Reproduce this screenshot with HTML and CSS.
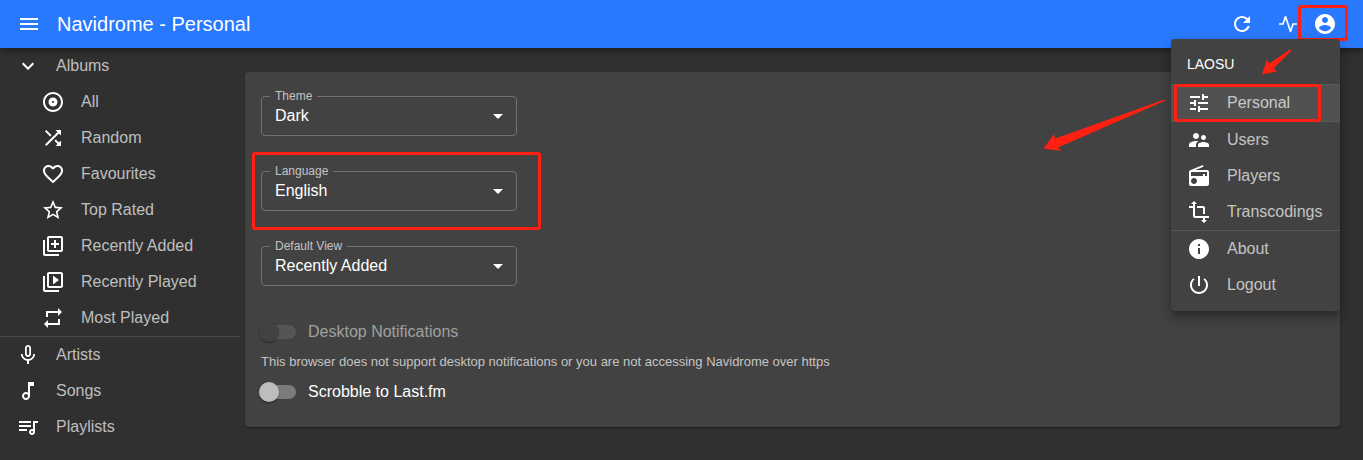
FILE: index.html
```html
<!DOCTYPE html>
<html lang="en">
<head>
<meta charset="utf-8">
<meta name="viewport" content="width=device-width, initial-scale=1">
<title>Navidrome - Personal</title>
<link rel="stylesheet" href="styles.css">
</head>
<body>
<header class="appbar">
  <button class="icon-button" type="button" aria-label="Toggle menu"><svg class="icon" viewBox="0 0 24 24"><path d="M3 18h18v-2H3v2zm0-5h18v-2H3v2zm0-7v2h18V6H3z"/></svg></button>
  <h1 class="title">Navidrome - Personal</h1>
  <div class="actions">
    <button class="icon-button" type="button" aria-label="Refresh"><svg class="icon" viewBox="0 0 24 24"><path d="M17.65 6.35C16.2 4.9 14.21 4 12 4c-4.42 0-7.99 3.58-7.99 8s3.57 8 7.99 8c3.73 0 6.84-2.55 7.73-6h-2.08c-.82 2.33-3.04 4-5.65 4-3.31 0-6-2.69-6-6s2.69-6 6-6c1.66 0 3.14.69 4.22 1.78L13 11h7V4l-2.35 2.35z"/></svg></button>
    <button class="icon-button activity" type="button" aria-label="Activity"><svg class="icon icon-small icon-line" viewBox="0 0 24 24"><polyline points="22 12 18 12 15 21 9 3 6 12 2 12"/></svg></button>
    <div class="account">
      <button class="icon-button" type="button" aria-label="Profile"><svg class="icon" viewBox="0 0 24 24"><path d="M12 2C6.48 2 2 6.48 2 12s4.48 10 10 10 10-4.48 10-10S17.52 2 12 2zm0 3c1.66 0 3 1.34 3 3s-1.34 3-3 3-3-1.34-3-3 1.34-3 3-3zm0 14.2c-2.5 0-4.71-1.28-6-3.22.03-1.99 4-3.08 6-3.08 1.99 0 5.97 1.09 6 3.08-1.29 1.94-3.5 3.22-6 3.22z"/></svg></button>
      <span class="mark mark-account"></span>
    </div>
  </div>
  <nav class="user-menu" aria-label="User menu">
    <div class="user-name">LAOSU</div>
    <a class="item item-selected" href="#personal"><svg class="icon" viewBox="0 0 24 24"><path d="M3 17v2h6v-2H3zM3 5v2h10V5H3zm10 16v-2h8v-2h-8v-2h-2v6h2zM7 9v2H3v2h4v2h2V9H7zm14 4v-2H11v2h10zm-6-4h2V7h4V5h-4V3h-2v6z"/></svg>Personal<span class="mark mark-item"></span></a>
    <a class="item" href="#users"><svg class="icon" viewBox="0 0 24 24"><path d="M16.5 12c1.38 0 2.49-1.12 2.49-2.5S17.88 7 16.5 7C15.12 7 14 8.12 14 9.5s1.12 2.5 2.5 2.5zM9 11c1.66 0 2.99-1.34 2.99-3S10.66 5 9 5C7.34 5 6 6.34 6 8s1.34 3 3 3zm7.5 3c-1.83 0-5.5.92-5.5 2.75V19h11v-2.25c0-1.83-3.67-2.75-5.5-2.75zM9 13c-2.33 0-7 1.17-7 3.5V19h7v-2.25c0-.85.33-2.34 2.37-3.47C10.5 13.1 9.66 13 9 13z"/></svg>Users</a>
    <a class="item" href="#players"><svg class="icon" viewBox="0 0 24 24"><path d="M3.24 6.15C2.51 6.43 2 7.17 2 8v12c0 1.1.89 2 2 2h16c1.11 0 2-.9 2-2V8c0-1.11-.89-2-2-2H8.3l8.26-3.34L15.88 1 3.24 6.15zM7 20c-1.66 0-3-1.34-3-3s1.34-3 3-3 3 1.34 3 3-1.34 3-3 3zm13-8h-2v-2h-2v2H4V8h16v4z"/></svg>Players</a>
    <a class="item" href="#transcodings"><svg class="icon" viewBox="0 0 24 24"><path d="M22 18v-2H8V4h2L7 1 4 4h2v2H2v2h4v8c0 1.1.9 2 2 2h8v2h-2l3 3 3-3h-2v-2h4zM10 8h6v6h2V8c0-1.1-.9-2-2-2h-6v2z"/></svg>Transcodings</a>
    <hr class="divider">
    <a class="item" href="#about"><svg class="icon" viewBox="0 0 24 24"><path d="M12 2C6.48 2 2 6.48 2 12s4.48 10 10 10 10-4.48 10-10S17.52 2 12 2zm1 15h-2v-6h2v6zm0-8h-2V7h2v2z"/></svg>About</a>
    <a class="item" href="#logout"><svg class="icon" viewBox="0 0 24 24"><path d="M13 3h-2v10h2V3zm4.83 2.17l-1.42 1.42C17.99 7.86 19 9.81 19 12c0 3.87-3.13 7-7 7s-7-3.13-7-7c0-2.19 1.01-4.14 2.58-5.42L6.17 5.17C4.23 6.82 3 9.26 3 12c0 4.97 4.03 9 9 9s9-4.03 9-9c0-2.74-1.23-5.18-3.17-6.83z"/></svg>Logout</a>
  </nav>
  <svg class="arrow arrow-short" viewBox="0 0 30 26"><path d="M0 25.5L4.700 11 7.300 14.500 28 .5 29.300 1.700 11.500 19.500 15 22.500z"/></svg>
  <svg class="arrow arrow-long" viewBox="0 0 123 53"><path d="M.5 49.700L11 35 12 39.700 120 1Q123 .5 121.500 2L15 48.600 18.500 51.800z"/></svg>
</header>

<div class="layout">
  <nav class="sidebar" aria-label="Main">
    <a class="item" href="#albums"><svg class="icon" viewBox="0 0 24 24"><path d="M16.59 8.59L12 13.17 7.41 8.59 6 10l6 6 6-6z"/></svg>Albums</a>
    <div class="submenu">
      <a class="item" href="#all"><svg class="icon" viewBox="0 0 24 24"><path d="M12 2C6.48 2 2 6.48 2 12s4.48 10 10 10 10-4.48 10-10S17.52 2 12 2zm0 18c-4.41 0-8-3.59-8-8s3.59-8 8-8 8 3.59 8 8-3.59 8-8 8zm0-12.5c-2.49 0-4.5 2.01-4.5 4.5s2.01 4.5 4.5 4.5 4.5-2.01 4.5-4.5-2.01-4.5-4.5-4.5zm0 5.5c-.55 0-1-.45-1-1s.45-1 1-1 1 .45 1 1-.45 1-1 1z"/></svg>All</a>
      <a class="item" href="#random"><svg class="icon" viewBox="0 0 24 24"><path d="M10.59 9.17L5.41 4 4 5.41l5.17 5.17 1.42-1.41zM14.5 4l2.04 2.04L4 18.59 5.41 20 17.96 7.46 20 9.5V4h-5.5zm.33 9.41l-1.41 1.41 3.13 3.13L14.5 20H20v-5.5l-2.04 2.04-3.13-3.13z"/></svg>Random</a>
      <a class="item" href="#favourites"><svg class="icon" viewBox="0 0 24 24"><path d="M16.5 3c-1.74 0-3.41.81-4.5 2.09C10.91 3.81 9.24 3 7.5 3 4.42 3 2 5.42 2 8.5c0 3.78 3.4 6.86 8.55 11.54L12 21.35l1.45-1.32C18.6 15.36 22 12.28 22 8.5 22 5.42 19.58 3 16.5 3zm-4.4 15.55l-.1.1-.1-.1C7.14 14.24 4 11.39 4 8.5 4 6.5 5.5 5 7.5 5c1.54 0 3.04.99 3.57 2.36h1.87C13.46 5.99 14.96 5 16.5 5c2 0 3.5 1.5 3.5 3.5 0 2.89-3.14 5.74-7.9 10.05z"/></svg>Favourites</a>
      <a class="item" href="#top-rated"><svg class="icon" viewBox="0 0 24 24"><path d="M22 9.24l-7.19-.62L12 2 9.19 8.63 2 9.24l5.46 4.73L5.82 21 12 17.27 18.18 21l-1.63-7.03L22 9.24zM12 15.4l-3.76 2.27 1-4.28-3.32-2.88 4.38-.38L12 6.1l1.71 4.04 4.38.38-3.32 2.88 1 4.28L12 15.4z"/></svg>Top Rated</a>
      <a class="item" href="#recently-added"><svg class="icon" viewBox="0 0 24 24"><path d="M4 6H2v14c0 1.1.9 2 2 2h14v-2H4V6zm16-4H8c-1.1 0-2 .9-2 2v12c0 1.1.9 2 2 2h12c1.1 0 2-.9 2-2V4c0-1.1-.9-2-2-2zm0 14H8V4h12v12zm-7-2h2v-3h3V9h-3V6h-2v3h-3v2h3z"/></svg>Recently Added</a>
      <a class="item" href="#recently-played"><svg class="icon" viewBox="0 0 24 24"><path d="M4 6H2v14c0 1.1.9 2 2 2h14v-2H4V6zm16-4H8c-1.1 0-2 .9-2 2v12c0 1.1.9 2 2 2h12c1.1 0 2-.9 2-2V4c0-1.1-.9-2-2-2zm0 14H8V4h12v12zM12 5.5v9l6-4.5z"/></svg>Recently Played</a>
      <a class="item" href="#most-played"><svg class="icon" viewBox="0 0 24 24"><path d="M7 7h10v3l4-4-4-4v3H5v6h2V7zm10 10H7v-3l-4 4 4 4v-3h12v-6h-2v4z"/></svg>Most Played</a>
    </div>
    <hr class="divider">
    <a class="item" href="#artists"><svg class="icon" viewBox="0 0 24 24"><path d="M12 14c1.66 0 3-1.34 3-3V5c0-1.66-1.34-3-3-3S9 3.34 9 5v6c0 1.66 1.34 3 3 3zm-1.2-9.1c0-.66.54-1.2 1.2-1.2s1.2.54 1.2 1.2l-.01 6.2c0 .66-.53 1.2-1.19 1.2s-1.2-.54-1.2-1.2V4.9zm6.5 6.1c0 3-2.54 5.1-5.3 5.1S6.7 14 6.7 11H5c0 3.41 2.72 6.23 6 6.72V21h2v-3.28c3.28-.48 6-3.3 6-6.72h-1.7z"/></svg>Artists</a>
    <a class="item" href="#songs"><svg class="icon" viewBox="0 0 24 24"><path d="M12 3l.01 10.55c-.59-.34-1.27-.55-2-.55C7.79 13 6 14.79 6 17s1.79 4 4.01 4S14 19.21 14 17V7h4V3h-6zm-1.99 16c-1.1 0-2-.9-2-2s.9-2 2-2 2 .9 2 2-.9 2-2 2z"/></svg>Songs</a>
    <a class="item" href="#playlists"><svg class="icon" viewBox="0 0 24 24"><path d="M22 6h-5v8.18c-.31-.11-.65-.18-1-.18-1.66 0-3 1.34-3 3s1.34 3 3 3 3-1.34 3-3V8h3V6zm-7 0H3v2h12V6zm0 4H3v2h12v-2zm-4 4H3v2h8v-2zm4 3c0-.55.45-1 1-1s1 .45 1 1-.45 1-1 1-1-.45-1-1z"/></svg>Playlists</a>
  </nav>

  <main class="content">
    <form class="card">
      <fieldset class="field">
        <legend class="legend"><label for="theme">Theme</label></legend>
        <div class="select-box">
          <select class="select" id="theme"><option>Dark</option></select>
          <svg class="icon caret" viewBox="0 0 24 24"><path d="M7 10l5 5 5-5z"/></svg>
        </div>
      </fieldset>
      <fieldset class="field">
        <legend class="legend"><label for="language">Language</label></legend>
        <div class="select-box">
          <select class="select" id="language"><option>English</option></select>
          <svg class="icon caret" viewBox="0 0 24 24"><path d="M7 10l5 5 5-5z"/></svg>
        </div>
        <span class="mark mark-field"></span>
      </fieldset>
      <fieldset class="field">
        <legend class="legend"><label for="view">Default View</label></legend>
        <div class="select-box">
          <select class="select" id="view"><option>Recently Added</option></select>
          <svg class="icon caret" viewBox="0 0 24 24"><path d="M7 10l5 5 5-5z"/></svg>
        </div>
      </fieldset>
      <div class="switches">
        <label class="switch-row switch-row-disabled"><input class="switch" type="checkbox" aria-describedby="notify-help" disabled>Desktop Notifications</label>
        <p class="helper" id="notify-help">This browser does not support desktop notifications or you are not accessing Navidrome over https</p>
        <label class="switch-row"><input class="switch" type="checkbox">Scrobble to Last.fm</label>
      </div>
    </form>
  </main>
</div>
</body>
</html>
```

FILE: styles.css
```css
* {
  box-sizing: border-box;
}

body {
  margin: 0;
  min-height: 100vh;
  background: #303030;
  color: #fff;
  font: 16px/24px "Liberation Sans", Arial, sans-serif;
}

.icon {
  flex: none;
  display: block;
  width: 24px;
  height: 24px;
  fill: #fff;
}

.icon-small {
  width: 20px;
  height: 20px;
}

.icon-line {
  fill: none;
  stroke: #fff;
  stroke-width: 2;
  stroke-linecap: round;
  stroke-linejoin: round;
}

.icon-button {
  display: block;
  padding: 0;
  border: 0;
  background: none;
}

/* App bar */
.appbar {
  position: relative;
  z-index: 1;
  display: flex;
  align-items: center;
  gap: 16px;
  height: 48px;
  padding: 0 26px 0 17px;
  background: #2979ff;
  box-shadow: 0 2px 4px -1px rgba(0, 0, 0, .2), 0 4px 5px rgba(0, 0, 0, .14), 0 1px 10px rgba(0, 0, 0, .12);
}

.title {
  flex: 1;
  margin: 0;
  font-size: 20px;
  font-weight: 400;
}

.actions {
  display: flex;
  align-items: center;
}

.activity {
  margin: 0 15px 0 24px;
}

.account {
  position: relative;
}

/* User menu */
.user-menu {
  position: absolute;
  top: 39px;
  right: 23px;
  min-width: 169px;
  padding: 8px 0;
  border-radius: 4px;
  background: #424242;
  box-shadow: 0 5px 5px -3px rgba(0, 0, 0, .2), 0 8px 10px 1px rgba(0, 0, 0, .14), 0 3px 14px 2px rgba(0, 0, 0, .12);
}

.user-name {
  padding: 5px 16px 8px;
  font-size: 14px;
}

.item {
  position: relative;
  display: flex;
  align-items: center;
  gap: 16px;
  padding: 6px 16px;
  color: rgba(255, 255, 255, .7);
  text-decoration: none;
}

.item-selected {
  border: solid #5a5a5a;
  border-width: 1px 0;
  background: #515151;
}

.divider {
  height: 1px;
  margin: 0;
  border: 0;
  background: #5a5a5a;
}

/* Page */
.layout {
  display: flex;
  align-items: flex-start;
}

.sidebar {
  flex: none;
  width: 240px;
}

.sidebar .divider {
  background: #494949;
}

.submenu {
  padding-left: 25px;
}

.content {
  flex: 1;
  padding: 24px 23px 24px 5px;
}

.card {
  display: flex;
  flex-direction: column;
  align-items: flex-start;
  gap: 27px;
  padding: 16px;
  border-radius: 4px;
  background: #424242;
  box-shadow: 0 2px 1px -1px rgba(0, 0, 0, .2), 0 1px 1px rgba(0, 0, 0, .14), 0 1px 3px rgba(0, 0, 0, .12);
}

/* Outlined select */
.field {
  position: relative;
  width: 256px;
  margin: 0;
  padding: 0 0 7px;
  border: 1px solid #717171;
  border-radius: 4px;
}

.legend {
  margin-left: 8px;
  padding: 0 5px;
  color: rgba(255, 255, 255, .7);
  font-size: 12px;
  line-height: 16px;
}

.select-box {
  display: grid;
  align-items: center;
}

.select,
.caret {
  grid-area: 1 / 1;
}

.select {
  width: 100%;
  height: 24px;
  padding: 0 32px 0 13px;
  border: 0;
  appearance: none;
  background: none;
  color: #fff;
  font: inherit;
}

.caret {
  justify-self: end;
  margin-right: 6px;
  pointer-events: none;
}

/* Switches */
.switch-row {
  display: flex;
  align-items: center;
  gap: 12px;
  height: 38px;
}

.switch-row-disabled {
  color: rgba(255, 255, 255, .5);
}

.switch {
  position: relative;
  width: 34px;
  height: 14px;
  margin: 0 0 0 1px;
  border-radius: 7px;
  appearance: none;
  background: #7b7b7b;
}

.switch::before {
  content: "";
  position: absolute;
  top: -3px;
  left: -3px;
  width: 20px;
  height: 20px;
  border-radius: 50%;
  background: #bdbdbd;
  box-shadow: 0 2px 1px -1px rgba(0, 0, 0, .2), 0 1px 1px rgba(0, 0, 0, .14), 0 1px 3px rgba(0, 0, 0, .12);
}

.switch:disabled {
  background: #555;
}

.switch:disabled::before {
  background: #424242;
}

.helper {
  margin: 0;
  color: rgba(255, 255, 255, .7);
  font-size: 13px;
  line-height: 22px;
}

/* Red highlights */
.mark {
  position: absolute;
  border: 3px solid #ff2012;
  border-radius: 3px;
  pointer-events: none;
}

.mark-account {
  inset: -7px -11px -5px -15px;
}

.mark-item {
  inset: -1px 19px -1px 3px;
}

.mark-field {
  inset: -27px -25px -20px -10px;
}

.arrow {
  position: absolute;
  fill: #ff2012;
  pointer-events: none;
}

.arrow-short {
  top: 49px;
  right: 71px;
  width: 30px;
  height: 26px;
}

.arrow-long {
  top: 99px;
  right: 197px;
  width: 123px;
  height: 53px;
}
```
